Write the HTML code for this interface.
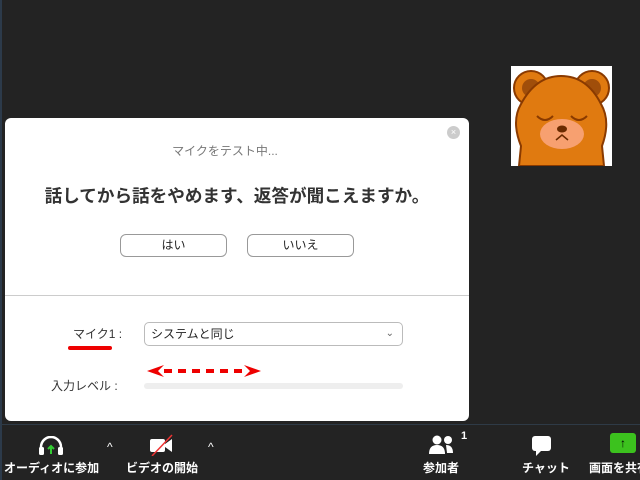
<!DOCTYPE html>
<html><head><meta charset="utf-8"><style>
body{margin:0;width:640px;height:480px;background:#232323;position:relative;overflow:hidden;font-family:"Liberation Sans","Noto Sans CJK JP",sans-serif}
.a{position:absolute}
.dlg{left:5px;top:118px;width:464px;height:303px;background:#fff;border-radius:6px}
.btn{border:1px solid #999;border-radius:6px;height:21px;width:105px;text-align:center;font-size:12px;line-height:21px;color:#222;background:#fff}
.tb{color:#fff;font-size:12px;font-weight:bold;text-align:center}
</style></head><body>
<div class="a" style="left:0;top:0;width:2px;height:480px;background:#2c3a4a"></div>
<div class="a" style="left:511px;top:66px;width:101px;height:100px;background:#fff;overflow:hidden">
<svg width="101" height="100" viewBox="0 0 101 100">
<circle cx="20" cy="22" r="17" fill="#e07a10" stroke="#8a3a00" stroke-width="2"/>
<circle cx="81" cy="22" r="17" fill="#e07a10" stroke="#8a3a00" stroke-width="2"/>
<circle cx="20" cy="22" r="9" fill="#a04e0a"/><circle cx="81" cy="22" r="9" fill="#a04e0a"/>
<path d="M8 100 L10 80 Q0 55 10 38 Q25 10 50 10 Q76 10 90 38 Q100 55 91 80 L93 100Z" fill="#e07a10" stroke="#8a3a00" stroke-width="2"/>
<ellipse cx="51" cy="68" rx="22" ry="15" fill="#f7a070"/>
<path d="M26 50 Q34 58 42 50 M60 50 Q68 58 76 50" stroke="#8a3a00" stroke-width="2" fill="none"/>
<ellipse cx="51" cy="63" rx="5" ry="3.5" fill="#6a2a00"/>
<path d="M45 74 L51 69 L57 74" stroke="#6a2a00" stroke-width="1.5" fill="none"/>
</svg></div>
<div class="a dlg">
<div class="a" style="right:9px;top:8px;width:13px;height:13px;border-radius:50%;background:#ccc;color:#fff;font-size:9px;text-align:center;line-height:13px">×</div>
<div class="a" style="left:0;width:440px;top:24px;text-align:center;font-size:12px;color:#777">マイクをテスト中...</div>
<div class="a" style="left:0;width:464px;top:65px;text-align:center;font-size:17.6px;font-weight:bold;color:#333;white-space:nowrap">話してから話をやめます、返答が聞こえますか。</div>
<div class="a btn" style="left:115px;top:116px">はい</div>
<div class="a btn" style="left:242px;top:116px">いいえ</div>
<div class="a" style="left:0;top:177px;width:464px;height:1px;background:#ccc"></div>
<div class="a" style="left:68px;top:207px;font-size:12px;color:#333">マイク1 :</div>
<div class="a" style="left:63px;top:228px;width:44px;height:4px;border-radius:2px;background:#e00"></div>
<div class="a" style="left:139px;top:204px;width:257px;height:22px;border:1px solid #bbb;border-radius:5px;font-size:12px;line-height:22px;color:#222;text-indent:6px">システムと同じ<span style="position:absolute;right:8px;color:#666;font-size:10px">⌄</span></div>
<div class="a" style="left:46px;top:259px;font-size:12px;color:#333">入力レベル :</div>
<svg class="a" style="left:139px;top:245px" width="120" height="16"><path d="M3 8 L20 2 L14 8 L20 14Z M100 2 L117 8 L100 14 L106 8Z" fill="#e00"/><path d="M20 8 H100" stroke="#e00" stroke-width="4" stroke-dasharray="8 6"/></svg>
<div class="a" style="left:139px;top:265px;width:259px;height:6px;border-radius:3px;background:#eee"></div>
</div>
<div class="a" style="left:0;top:424px;width:640px;height:1px;background:#2e3a46"></div>
<svg class="a" style="left:38px;top:436px" width="26" height="20"><path d="M3 16 V11 A10 10 0 0 1 23 11 V16" stroke="#fff" stroke-width="2.5" fill="none"/><rect x="1" y="11" width="5" height="8" rx="1.5" fill="#fff"/><rect x="20" y="11" width="5" height="8" rx="1.5" fill="#fff"/><path d="M13 18 V10 M10 13 L13 10 L16 13" stroke="#3c3" stroke-width="2" fill="none"/></svg>
<div class="a" style="left:107px;top:440px;color:#fff;font-size:12px">^</div>
<svg class="a" style="left:148px;top:434px" width="28" height="22"><rect x="2" y="5" width="15" height="13" rx="2" fill="#fff"/><path d="M17 10 L24 5 V18 L17 13Z" fill="#fff"/><path d="M4 22 L24 1" stroke="#e33" stroke-width="1.5"/></svg>
<div class="a" style="left:208px;top:440px;color:#fff;font-size:12px">^</div>
<div class="a tb" style="left:4px;top:459px">オーディオに参加</div>
<div class="a tb" style="left:126px;top:459px">ビデオの開始</div>
<svg class="a" style="left:428px;top:434px" width="30" height="22"><circle cx="9" cy="6" r="4.5" fill="#fff"/><path d="M1 20 Q1 11 9 11 Q17 11 17 20Z" fill="#fff"/><circle cx="20" cy="6" r="4" fill="#fff"/><path d="M18 11 Q25 11 25 19 H19Z" fill="#fff"/></svg>
<div class="a" style="left:461px;top:430px;color:#fff;font-size:11px;font-weight:bold">1</div>
<div class="a tb" style="left:423px;top:459px">参加者</div>
<svg class="a" style="left:531px;top:436px" width="22" height="22"><rect x="1" y="0" width="19" height="15" rx="3" fill="#fff"/><path d="M5 14 L5 20 L11 14Z" fill="#fff"/></svg>
<div class="a tb" style="left:522px;top:459px">チャット</div>
<div class="a" style="left:610px;top:433px;width:26px;height:20px;border-radius:3px;background:#3cc21e;color:#000;font-size:12px;text-align:center;line-height:20px;font-weight:bold">↑</div>
<div class="a tb" style="left:589px;top:459px;white-space:nowrap">画面を共有</div>
</body></html>
